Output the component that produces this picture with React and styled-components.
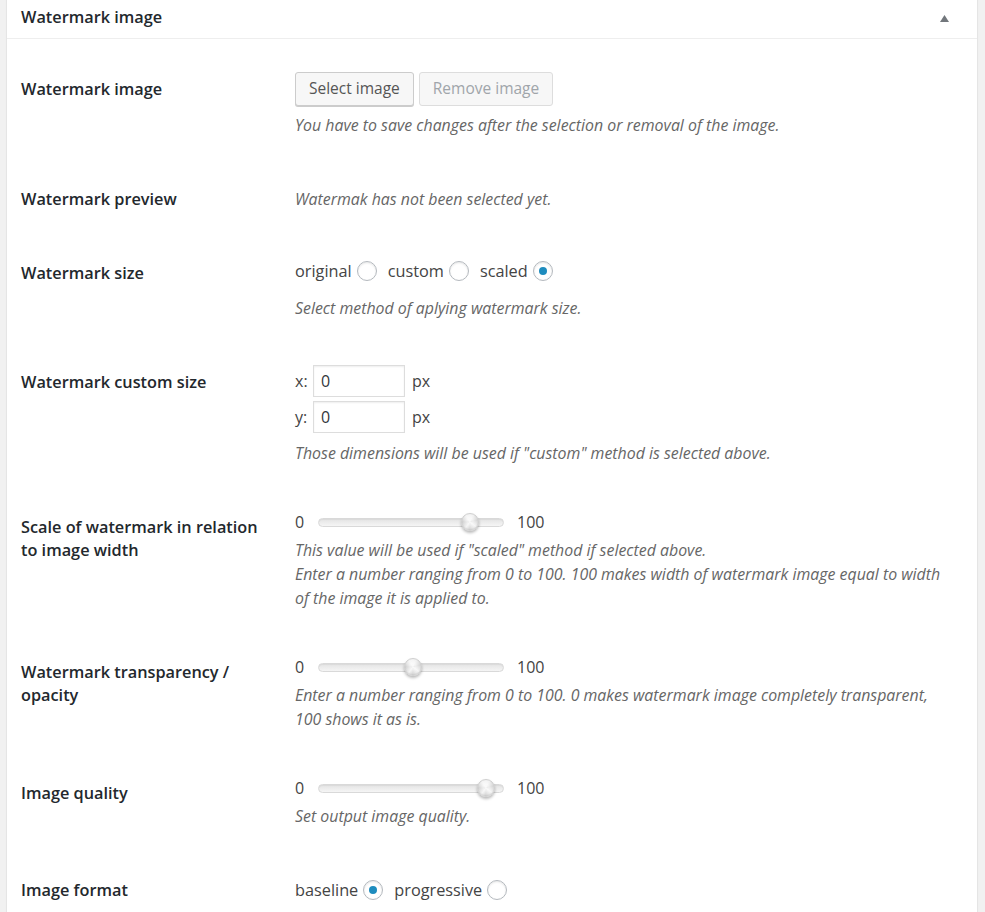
import React from "react";
import styled, { createGlobalStyle } from "styled-components";

const Global = createGlobalStyle`
  html, body { margin: 0; padding: 0; background: #f1f1f1; }
  body { font-family: "Open Sans", "Noto Sans", sans-serif; color: #444; }
  * { box-sizing: border-box; }
`;

const Page = styled.div`
  padding: 0 7px 0 6px;
  min-height: 912px;
`;

const Box = styled.div`
  background: #fff;
  border: 1px solid #e5e5e5;
  margin-top: -1px;
  box-shadow: 0 1px 1px rgba(0,0,0,.04);
`;

const Header = styled.div`
  height: 39px;
  display: flex;
  align-items: center;
  justify-content: space-between;
  padding: 0 28px 3px 14px;
  border-bottom: 1px solid #eee;
`;

const HeaderTitle = styled.h2`
  margin: 0;
  font-size: 16.3px;
  font-weight: 600;
  color: #23282d;
  line-height: 23px;
`;

const Toggle = styled.svg`
  width: 9px;
  height: 7px;
  display: block;
  margin-top: 1px;
`;

const Table = styled.div`
  padding: 11px 14px 0 14px;
`;

const Row = styled.div`
  display: grid;
  grid-template-columns: 274px 1fr;
  padding: 22px 0 23px;
`;

const Label = styled.div`
  font-size: 16.3px;
  font-weight: 600;
  color: #23282d;
  line-height: 23px;
  padding-top: 6px;
  padding-right: 22px;
`;

const Cell = styled.div`
  display: flex;
  flex-direction: column;
  align-items: flex-start;
  padding-right: 16px;
`;

const ButtonRow = styled.div`
  display: flex;
  gap: 5px;
`;

const Button = styled.button`
  height: 34px;
  padding: 0 13px 2px;
  font-family: inherit;
  font-size: 15.5px;
  line-height: 30px;
  border-radius: 3px;
  border: 1px solid ${p => (p.disabled ? "#ddd" : "#ccc")};
  background: #f7f7f7;
  color: ${p => (p.disabled ? "#a0a5aa" : "#555")};
  box-shadow: ${p => (p.disabled ? "none" : "0 1px 0 #ccc")};
  cursor: ${p => (p.disabled ? "default" : "pointer")};
`;

const Description = styled.p`
  margin: ${p => p.$mt || 0}px 0 0;
  font-size: 15.9px;
  font-style: italic;
  color: #666;
  line-height: 24px;
`;

const RadioLine = styled.div`
  height: 30px;
  display: flex;
  align-items: center;
  font-size: 16.3px;
  color: #444;
  margin-top: ${p => p.$mt || 0}px;
`;

const RadioItem = styled.label`
  display: flex;
  align-items: center;
  gap: 5px;
  margin-right: 11px;
`;

const RadioCircle = styled.span`
  width: 20px;
  height: 20px;
  border-radius: 50%;
  border: 1px solid #b4b9be;
  background: #fff;
  box-shadow: inset 0 1px 2px rgba(0,0,0,.1);
  display: flex;
  align-items: center;
  justify-content: center;
  &::after {
    content: "";
    width: 8px;
    height: 8px;
    border-radius: 50%;
    background: #1e8cbe;
    display: ${p => (p.$checked ? "block" : "none")};
  }
`;

const SizeLine = styled.div`
  display: flex;
  align-items: center;
  font-size: 16px;
  color: #444;
  margin-top: ${p => p.$mt || 0}px;
`;

const Axis = styled.span`
  width: 18px;
`;

const NumInput = styled.input`
  width: 92px;
  height: 32px;
  border: 1px solid #ddd;
  box-shadow: inset 0 1px 2px rgba(0,0,0,.07);
  font-family: inherit;
  font-size: 16px;
  color: #32373c;
  padding: 0 7px;
  margin-right: 7px;
  outline: none;
`;

const SliderLine = styled.div`
  height: 24px;
  display: flex;
  align-items: center;
  font-size: 16px;
  color: #444;
  line-height: 24px;
`;

const SliderMin = styled.span`
  width: 23px;
`;

const SliderMax = styled.span`
  margin-left: 13px;
`;

const Track = styled.div`
  position: relative;
  width: 186px;
  height: 9px;
  border-radius: 5px;
  border: 1px solid #d9d9d9;
  background: linear-gradient(#e4e4e4, #f5f5f5);
  box-shadow: inset 0 1px 1px rgba(0,0,0,.05);
`;

const Handle = styled.span`
  position: absolute;
  top: 50%;
  width: 18px;
  height: 18px;
  margin: -9px 0 0 -9px;
  border-radius: 50%;
  background:
    radial-gradient(circle at 50% 45%, rgba(255,255,255,.55) 0 3px, rgba(255,255,255,0) 7px),
    conic-gradient(from 20deg, #f2f2f2, #d6d6d6 15%, #f5f5f5 30%, #dadada 45%, #f2f2f2 55%, #d3d3d3 70%, #f4f4f4 85%, #f2f2f2);
  border: 1px solid #cfcfcf;
  box-shadow: 0 2px 3px rgba(0,0,0,.28), inset 0 -1px 1px rgba(0,0,0,.08);
`;

function Radio({ label, checked }) {
  return (
    <RadioItem>
      {label}
      <RadioCircle $checked={checked} />
    </RadioItem>
  );
}

function Slider({ value }) {
  return (
    <SliderLine>
      <SliderMin>0</SliderMin>
      <Track>
        <Handle style={{ left: `${value}%` }} />
      </Track>
      <SliderMax>100</SliderMax>
    </SliderLine>
  );
}

export default function App() {
  return (
    <>
      <Global />
      <Page>
        <Box>
          <Header>
            <HeaderTitle>Watermark image</HeaderTitle>
            <Toggle viewBox="0 0 9 7">
              <polygon points="4.5,0 9,7 0,7" fill="#72777c" />
            </Toggle>
          </Header>
          <Table>
            <Row>
              <Label>Watermark image</Label>
              <Cell>
                <ButtonRow>
                  <Button>Select image</Button>
                  <Button disabled>Remove image</Button>
                </ButtonRow>
                <Description $mt={7}>
                  You have to save changes after the selection or removal of the image.
                </Description>
              </Cell>
            </Row>
            <Row>
              <Label>Watermark preview</Label>
              <Cell>
                <Description $mt={5}>Watermak has not been selected yet.</Description>
              </Cell>
            </Row>
            <Row>
              <Label>Watermark size</Label>
              <Cell>
                <RadioLine>
                  <Radio label="original" />
                  <Radio label="custom" />
                  <Radio label="scaled" checked />
                </RadioLine>
                <Description $mt={10}>Select method of aplying watermark size.</Description>
              </Cell>
            </Row>
            <Row>
              <Label>Watermark custom size</Label>
              <Cell>
                <SizeLine>
                  <Axis>x:</Axis>
                  <NumInput defaultValue="0" />
                  px
                </SizeLine>
                <SizeLine $mt={4}>
                  <Axis>y:</Axis>
                  <NumInput defaultValue="0" />
                  px
                </SizeLine>
                <Description $mt={8}>
                  Those dimensions will be used if "custom" method is selected above.
                </Description>
              </Cell>
            </Row>
            <Row>
              <Label>Scale of watermark in relation to image width</Label>
              <Cell>
                <Slider value={82} />
                <Description $mt={4}>
                  This value will be used if "scaled" method if selected above.
                  <br />
                  Enter a number ranging from 0 to 100. 100 makes width of watermark image equal to width of the image it is applied to.
                </Description>
              </Cell>
            </Row>
            <Row>
              <Label>Watermark transparency / opacity</Label>
              <Cell>
                <Slider value={51} />
                <Description $mt={4}>
                  Enter a number ranging from 0 to 100. 0 makes watermark image completely transparent, 100 shows it as is.
                </Description>
              </Cell>
            </Row>
            <Row>
              <Label>Image quality</Label>
              <Cell>
                <Slider value={91} />
                <Description $mt={4}>Set output image quality.</Description>
              </Cell>
            </Row>
            <Row>
              <Label>Image format</Label>
              <Cell>
                <RadioLine $mt={2}>
                  <Radio label="baseline" checked />
                  <Radio label="progressive" />
                </RadioLine>
              </Cell>
            </Row>
          </Table>
        </Box>
      </Page>
    </>
  );
}
